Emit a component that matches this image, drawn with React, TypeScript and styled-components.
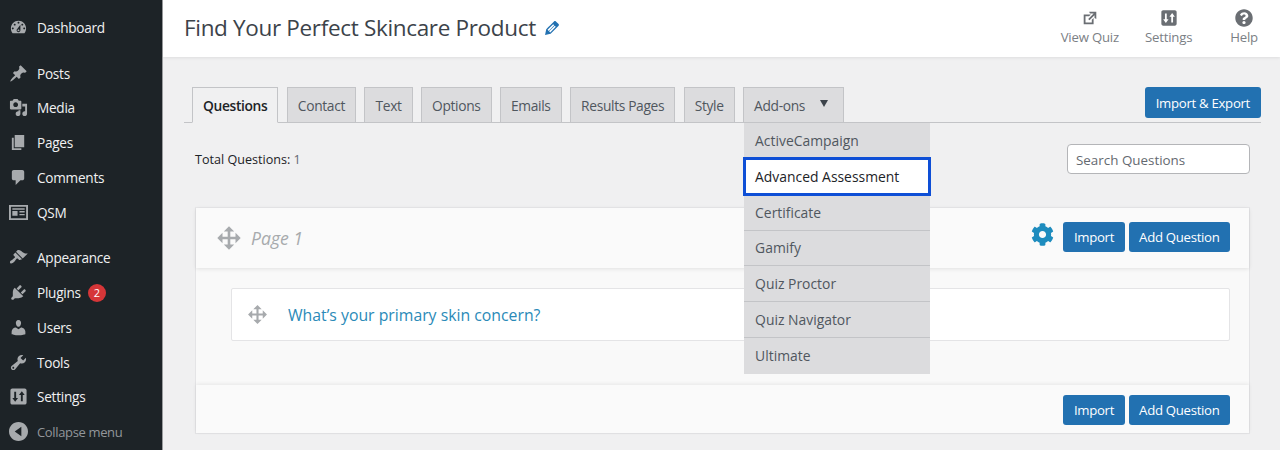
import React, { type FC } from 'react';
import styled, { createGlobalStyle } from 'styled-components';
import { FaCog, FaQuestionCircle } from 'react-icons/fa';

const FONT = `"Open Sans", "Noto Sans", sans-serif`;

const ICONS = {
  dashboard:
    'M3.76 16h12.48c1.1-1.37 1.76-3.11 1.76-5 0-4.42-3.58-8-8-8s-8 3.58-8 8c0 1.89.66 3.63 1.76 5zM10 4c.55 0 1 .45 1 1s-.45 1-1 1-1-.45-1-1 .45-1 1-1zM6 6c.55 0 1 .45 1 1s-.45 1-1 1-1-.45-1-1 .45-1 1-1zm8 0c.55 0 1 .45 1 1s-.45 1-1 1-1-.45-1-1 .45-1 1-1zm-5.37 5.55L12 7v6c0 1.1-.9 2-2 2s-2-.9-2-2c0-.57.24-1.08.63-1.45zM4 10c.55 0 1 .45 1 1s-.45 1-1 1-1-.45-1-1 .45-1 1-1zm12 0c.55 0 1 .45 1 1s-.45 1-1 1-1-.45-1-1 .45-1 1-1zm-5 3c0-.55-.45-1-1-1s-1 .45-1 1 .45 1 1 1 1-.45 1-1z',
  posts:
    'M10.44 3.02l1.82-1.82 6.36 6.35-1.83 1.82c-1.05-.68-2.48-.57-3.41.36l-.75.75c-.92.93-1.04 2.35-.35 3.41l-1.83 1.82-2.41-2.41-2.8 2.79c-.42.42-3.38 2.71-3.8 2.29s1.86-3.39 2.28-3.81l2.79-2.79L4.1 9.36l1.83-1.82c1.05.69 2.48.57 3.4-.36l.75-.75c.93-.92 1.05-2.35.36-3.41z',
  media:
    'M13 11V4c0-.55-.45-1-1-1h-1.67L9 1H5L3.67 3H2c-.55 0-1 .45-1 1v7c0 .55.45 1 1 1h10c.55 0 1-.45 1-1zM7 4.5c1.38 0 2.5 1.12 2.5 2.5S8.38 9.5 7 9.5 4.5 8.38 4.5 7 5.62 4.5 7 4.5zM14 6h5v10.5c0 1.38-1.12 2.5-2.5 2.5S14 17.88 14 16.5s1.12-2.5 2.5-2.5c.17 0 .34.02.5.05V9h-3V6zm-4 8.05V13h2v3.5c0 1.38-1.12 2.5-2.5 2.5S7 17.88 7 16.5 8.12 14 9.5 14c.17 0 .34.02.5.05z',
  pages: 'M6 15V2h10v13H6zm-1 1h8v2H3V5h2v11z',
  comments:
    'M5 2h9c1.1 0 2 .9 2 2v7c0 1.1-.9 2-2 2h-2l-5 5v-5H5c-1.1 0-2-.9-2-2V4c0-1.1.9-2 2-2z',
  qsm: 'M0 2h20v16H0z M2 4v12h16V4z M3.5 8.5h5.5v5H3.5z M11 8.5h5.5V10H11z M11 11.5h5.5V13H11z M3.5 5.5h13V7h-13z',
  appearance:
    'M14.48 11.06L7.41 3.99l1.5-1.5c.5-.56 2.3-.47 3.51.32 1.21.8 1.43 1.28 2.91 2.1 1.18.64 2.45 1.26 4.45.85zm-.71.71L6.7 4.7 4.93 6.47c-.39.39-.39 1.02 0 1.41l1.06 1.06c.39.39.39 1.03 0 1.42-.6.6-1.43 1.11-2.21 1.69-.35.26-.7.53-1.01.84C1.43 13.23.4 14.94 1.4 15.94c.99 1 2.71-.04 4.03-1.36.31-.31.58-.66.85-1.02.57-.78 1.08-1.61 1.69-2.21.39-.39 1.02-.39 1.41 0l1.06 1.06c.39.39 1.02.39 1.41 0z',
  plugins:
    'M13.11 4.36L9.87 7.6 8 5.73l3.24-3.24c.35-.34 1.05-.2 1.56.32.52.51.66 1.21.31 1.55zm-8 1.77l.91-1.12 9.01 9.01-1.19.84c-.71.71-2.63 1.16-3.82 1.16H6.14L4.9 17.26c-.59.59-1.54.59-2.12 0-.59-.58-.59-1.53 0-2.12l1.24-1.24v-3.88c0-1.13.4-3.19 1.09-3.89zm7.26 3.97l3.24-3.24c.34-.35 1.04-.21 1.55.31.52.51.66 1.21.31 1.55l-3.24 3.25z',
  users:
    'M10 9.25c-2.27 0-2.73-3.44-2.73-3.44C7 4.02 7.82 2 9.97 2c2.16 0 2.98 2.02 2.71 3.81 0 0-.41 3.44-2.68 3.44zm0 2.57L12.72 10c2.39 0 4.52 2.33 4.52 4.53v2.49s-3.65 1.13-7.24 1.13c-3.65 0-7.24-1.13-7.24-1.13v-2.49c0-2.25 1.94-4.48 4.47-4.48z',
  tools:
    'M16.68 9.77c-1.34 1.34-3.3 1.67-4.95.99l-5.41 6.52c-.99.99-2.59.99-3.58 0s-.99-2.59 0-3.57l6.52-5.42c-.68-1.65-.35-3.61.99-4.95 1.28-1.28 3.12-1.62 4.72-1.06l-2.89 2.89 2.82 2.82 2.86-2.87c.53 1.58.18 3.39-1.08 4.65zM3.81 16.21c.4.39 1.04.39 1.43 0 .4-.4.4-1.04 0-1.43-.39-.4-1.03-.4-1.43 0-.39.39-.39 1.03 0 1.43z',
  settings:
    'M3.5 1.5h13c1.1 0 2 .9 2 2v13c0 1.1-.9 2-2 2h-13c-1.1 0-2-.9-2-2v-13c0-1.1.9-2 2-2z M5.5 5v6.5H3.5L6.5 15.5 9.5 11.5H7.5V5z M13.5 4.5L10.5 8.5H12.5V15H14.5V8.5H16.5z',
  collapse:
    'M10 0c5.52 0 10 4.48 10 10s-4.48 10-10 10S0 15.52 0 10 4.48 0 10 0z M13 5L6 10l7 5z',
  external:
    'M9 3h8v8l-2-1V6.92l-5.6 5.59-1.41-1.41L14.08 5H10zm3 12v-3l2-2v7H3V6h8L9 8H5v7h7z',
  edit: 'M13.89 3.39l2.71 2.72c.46.46.42 1.24.03 1.64l-8.01 8.02-5.56 1.16 1.16-5.58s7.6-7.63 7.99-8.03c.39-.39 1.22-.39 1.68.07zm-2.73 2.79l-5.59 5.61 1.11 1.11 5.54-5.65zm-2.97 8.23l5.58-5.6-1.07-1.08-5.59 5.6z',
  move: 'M19 10l-4 4v-3h-4v4h3l-4 4-4-4h3v-4H5v3l-4-4 4-4v3h4V5H6l4-4 4 4h-3v4h4V6z',
};

const MENU_GROUPS = [
  [{ name: 'Dashboard', icon: ICONS.dashboard }],
  [
    { name: 'Posts', icon: ICONS.posts },
    { name: 'Media', icon: ICONS.media },
    { name: 'Pages', icon: ICONS.pages },
    { name: 'Comments', icon: ICONS.comments },
    { name: 'QSM', icon: ICONS.qsm },
  ],
  [
    { name: 'Appearance', icon: ICONS.appearance },
    { name: 'Plugins', icon: ICONS.plugins, badge: 2 },
    { name: 'Users', icon: ICONS.users },
    { name: 'Tools', icon: ICONS.tools },
    { name: 'Settings', icon: ICONS.settings },
  ],
];

const TABS = ['Questions', 'Contact', 'Text', 'Options', 'Emails', 'Results Pages', 'Style'];

const ADDONS = [
  'ActiveCampaign',
  'Advanced Assessment',
  'Certificate',
  'Gamify',
  'Quiz Proctor',
  'Quiz Navigator',
  'Ultimate',
];

const GlobalStyle = createGlobalStyle`
  html, body {
    margin: 0;
    height: 450px;
    overflow: hidden;
    background: #f0f0f1;
    font-family: ${FONT};
  }
  * {
    box-sizing: border-box;
  }
`;

const Layout = styled.div`
  display: flex;
  width: 1280px;
  height: 450px;
  overflow: hidden;
`;

const Sidebar = styled.aside`
  width: 163px;
  flex-shrink: 0;
  padding-top: 10px;
  background: #1d2327;
  border-right: 1px solid #9a9c9e;
  display: flex;
  flex-direction: column;
  gap: 11px;
`;

const MenuGroup = styled.ul`
  margin: 0;
  padding: 0;
  list-style: none;
`;

const MenuItem = styled.li<{ $muted?: boolean }>`
  height: 34.75px;
  padding-left: 9px;
  display: flex;
  align-items: center;
  gap: 9px;
  font-size: ${(p) => (p.$muted ? '13px' : '13.6px')};
  letter-spacing: ${(p) => (p.$muted ? '-0.35px' : '-0.25px')};
  color: ${(p) => (p.$muted ? '#92969a' : '#f0f0f1')};
`;

const MenuIcon = styled.svg`
  width: 19px;
  height: 19px;
  flex-shrink: 0;
  fill: #a7aaad;
  fill-rule: evenodd;
`;

const Badge = styled.span`
  width: 18px;
  height: 18px;
  margin-left: -2px;
  border-radius: 50%;
  background: #d63638;
  color: #fff;
  font-size: 11px;
  display: flex;
  align-items: center;
  justify-content: center;
`;

const Main = styled.div`
  flex: 1;
  min-width: 0;
  display: flex;
  flex-direction: column;
`;

const Header = styled.header`
  height: 57px;
  flex-shrink: 0;
  padding: 0 22px 2px 21px;
  background: #fff;
  box-shadow: 0 1px 3px rgba(0, 0, 0, 0.08);
  display: flex;
  align-items: center;
  justify-content: space-between;
`;

const TitleRow = styled.div`
  display: flex;
  align-items: center;
  gap: 6px;
`;

const Title = styled.h1`
  margin: 0;
  font-size: 22.5px;
  letter-spacing: -0.33px;
  font-weight: 400;
  color: #3c434a;
`;

const EditIcon = styled.svg`
  width: 20px;
  height: 20px;
  fill: #2271b1;
`;

const HeaderActions = styled.div`
  display: flex;
  gap: 38px;
`;

const HeaderAction = styled.div`
  display: flex;
  flex-direction: column;
  align-items: center;
  gap: 1px;
  font-size: 13.2px;
  letter-spacing: -0.2px;
  color: #7b8085;

  &:first-child {
    margin-right: -12px;
  }

  & svg {
    width: 18px;
    height: 18px;
    fill: #6a6e73;
    fill-rule: evenodd;
  }
`;

const Content = styled.main`
  flex: 1;
  padding: 30px 19px 0 21px;
`;

const TabBar = styled.div`
  display: flex;
  align-items: flex-end;
  justify-content: space-between;
  height: 36px;
  border-bottom: 1px solid #c3c4c7;
`;

const Tabs = styled.nav`
  display: flex;
  gap: 8.5px;
  padding-left: 8px;
`;

const Tab = styled.div<{ $active?: boolean }>`
  height: 36px;
  margin-bottom: -1px;
  padding: 0 10px;
  display: flex;
  align-items: center;
  gap: 15px;
  font-size: 13.8px;
  letter-spacing: -0.35px;
  font-weight: ${(p) => (p.$active ? 600 : 500)};
  color: ${(p) => (p.$active ? '#1d2327' : '#50575e')};
  background: ${(p) => (p.$active ? '#f0f0f1' : '#dcdcde')};
  border: 1px solid #c3c4c7;
  border-bottom-color: ${(p) => (p.$active ? '#f0f0f1' : '#c3c4c7')};
`;

const Caret = styled.span`
  width: 0;
  height: 0;
  margin: -4px 5px 0 0;
  border-left: 4.5px solid transparent;
  border-right: 4.5px solid transparent;
  border-top: 7px solid #3c434a;
`;

const AddonsWrap = styled.div`
  position: relative;
`;

const Dropdown = styled.ul`
  position: absolute;
  top: 36px;
  left: 1px;
  z-index: 5;
  width: 186px;
  margin: 0;
  padding: 0;
  list-style: none;
  background: #dcdcde;
`;

const DropdownItem = styled.li<{ $focused?: boolean }>`
  height: ${(p) => (p.$focused ? '38.85px' : '35.85px')};
  margin: ${(p) => (p.$focused ? '-1.5px -1px' : '0')};
  position: relative;
  padding-left: ${(p) => (p.$focused ? '9px' : '11px')};
  display: flex;
  align-items: center;
  font-size: 13.9px;
  font-weight: 500;
  color: ${(p) => (p.$focused ? '#1d2327' : '#50575e')};
  background: ${(p) => (p.$focused ? '#fff' : 'transparent')};
  border: ${(p) => (p.$focused ? '3px solid #0e4fd6' : '0')};
  border-bottom: ${(p) => (p.$focused ? '3px solid #0e4fd6' : '1px solid #c3c4c7')};

  &:last-child {
    border-bottom: 0;
  }
`;

const BlueButton = styled.button`
  height: 30px;
  padding: 0 10.5px;
  border: 0;
  border-radius: 3px;
  background: #2271b1;
  color: #fff;
  font-family: ${FONT};
  font-size: 13.2px;
  letter-spacing: -0.3px;
  white-space: nowrap;
`;

const ExportButton = styled(BlueButton)`
  align-self: flex-start;
  height: 31px;
  padding: 0 11px;
`;

const ToolsRow = styled.div`
  height: 84px;
  padding: 21px 11px 0;
  display: flex;
  justify-content: space-between;
  align-items: flex-start;
`;

const TotalLabel = styled.div`
  margin-top: 7px;
  font-size: 12.6px;
  font-weight: 500;
  color: #1d2327;

  & span {
    color: #646970;
    font-weight: 400;
  }
`;

const SearchInput = styled.input`
  width: 183px;
  height: 30px;
  padding: 1px 8px 0;
  border: 1px solid #b4b5b8;
  border-radius: 4px;
  background: #fff;
  font-family: ${FONT};
  font-size: 13.4px;

  &::placeholder {
    color: #646970;
    opacity: 1;
  }
`;

const PagePanel = styled.section`
  margin: 0 11px;
  background: #f9f9f9;
  border: 1px solid #e4e4e6;
  border-top-color: #e8e8ea;
`;

const PanelBar = styled.div<{ $raised?: boolean; $height: number }>`
  height: ${(p) => p.$height}px;
  padding: ${(p) => (p.$raised ? '0 19px 2px 20px' : '2px 19px 0 20px')};
  display: flex;
  align-items: center;
  justify-content: space-between;
  background: #fafafa;
  box-shadow: ${(p) => (p.$raised ? '0 1px 4px rgba(0, 0, 0, 0.1)' : '0 -1px 4px rgba(0, 0, 0, 0.08)')};
`;

const PageName = styled.div`
  display: flex;
  align-items: center;
  gap: 9px;
  padding-top: 1px;
  font-size: 17.6px;
  font-style: italic;
  color: #a7aaad;
`;

const MoveIcon = styled.svg<{ $size: number }>`
  width: ${(p) => p.$size}px;
  height: ${(p) => p.$size}px;
  fill: #a7aaad;
  flex-shrink: 0;
`;

const ButtonGroup = styled.div`
  display: flex;
  align-items: center;
  gap: 4px;
`;

const GearButton = styled.span`
  display: flex;
  margin: -6px 5px 0 0;
  color: #1e8cbe;
  font-size: 23px;
`;

const PanelBody = styled.div`
  height: 117px;
  padding: 20px 19px 0 35px;
`;

const QuestionCard = styled.div`
  height: 53px;
  padding-left: 15px;
  display: flex;
  align-items: center;
  gap: 20px;
  background: #fff;
  border: 1px solid #e4e4e6;
  border-radius: 2px;
`;

const QuestionTitle = styled.div`
  font-size: 15.8px;
  font-weight: 500;
  color: #2a8ab8;
`;

const App: FC = () => {
  return (
    <Layout>
      <GlobalStyle />
      <Sidebar>
        {MENU_GROUPS.map((group, ind) => (
          <MenuGroup key={ind}>
            {group.map((item) => (
              <MenuItem key={item.name}>
                <MenuIcon viewBox="0 0 20 20">
                  <path d={item.icon} />
                </MenuIcon>
                {item.name}
                {item.badge && <Badge>{item.badge}</Badge>}
              </MenuItem>
            ))}
            {ind === 2 && (
              <MenuItem $muted>
                <MenuIcon viewBox="0 0 20 20">
                  <path d={ICONS.collapse} />
                </MenuIcon>
                Collapse menu
              </MenuItem>
            )}
          </MenuGroup>
        ))}
      </Sidebar>
      <Main>
        <Header>
          <TitleRow>
            <Title>Find Your Perfect Skincare Product</Title>
            <EditIcon viewBox="0 0 20 20">
              <path d={ICONS.edit} />
            </EditIcon>
          </TitleRow>
          <HeaderActions>
            <HeaderAction>
              <svg viewBox="0 0 20 20">
                <path d={ICONS.external} />
              </svg>
              View Quiz
            </HeaderAction>
            <HeaderAction>
              <svg viewBox="0 0 20 20">
                <path d={ICONS.settings} />
              </svg>
              Settings
            </HeaderAction>
            <HeaderAction>
              <FaQuestionCircle />
              Help
            </HeaderAction>
          </HeaderActions>
        </Header>
        <Content>
          <TabBar>
            <Tabs>
              {TABS.map((tab, ind) => (
                <Tab key={tab} $active={ind === 0}>
                  {tab}
                </Tab>
              ))}
              <AddonsWrap>
                <Tab>
                  Add-ons
                  <Caret />
                </Tab>
                <Dropdown>
                  {ADDONS.map((addon) => (
                    <DropdownItem key={addon} $focused={addon === 'Advanced Assessment'}>
                      {addon}
                    </DropdownItem>
                  ))}
                </Dropdown>
              </AddonsWrap>
            </Tabs>
            <ExportButton>Import &amp; Export</ExportButton>
          </TabBar>
          <ToolsRow>
            <TotalLabel>
              Total Questions: <span>1</span>
            </TotalLabel>
            <SearchInput placeholder="Search Questions" />
          </ToolsRow>
          <PagePanel>
            <PanelBar $raised $height={60}>
              <PageName>
                <MoveIcon $size={26} viewBox="0 0 20 20">
                  <path d={ICONS.move} />
                </MoveIcon>
                Page 1
              </PageName>
              <ButtonGroup>
                <GearButton>
                  <FaCog />
                </GearButton>
                <BlueButton>Import</BlueButton>
                <BlueButton>Add Question</BlueButton>
              </ButtonGroup>
            </PanelBar>
            <PanelBody>
              <QuestionCard>
                <MoveIcon $size={21} viewBox="0 0 20 20">
                  <path d={ICONS.move} />
                </MoveIcon>
                <QuestionTitle>What’s your primary skin concern?</QuestionTitle>
              </QuestionCard>
            </PanelBody>
            <PanelBar $height={48}>
              <span />
              <ButtonGroup>
                <BlueButton>Import</BlueButton>
                <BlueButton>Add Question</BlueButton>
              </ButtonGroup>
            </PanelBar>
          </PagePanel>
        </Content>
      </Main>
    </Layout>
  );
};

export default App;
